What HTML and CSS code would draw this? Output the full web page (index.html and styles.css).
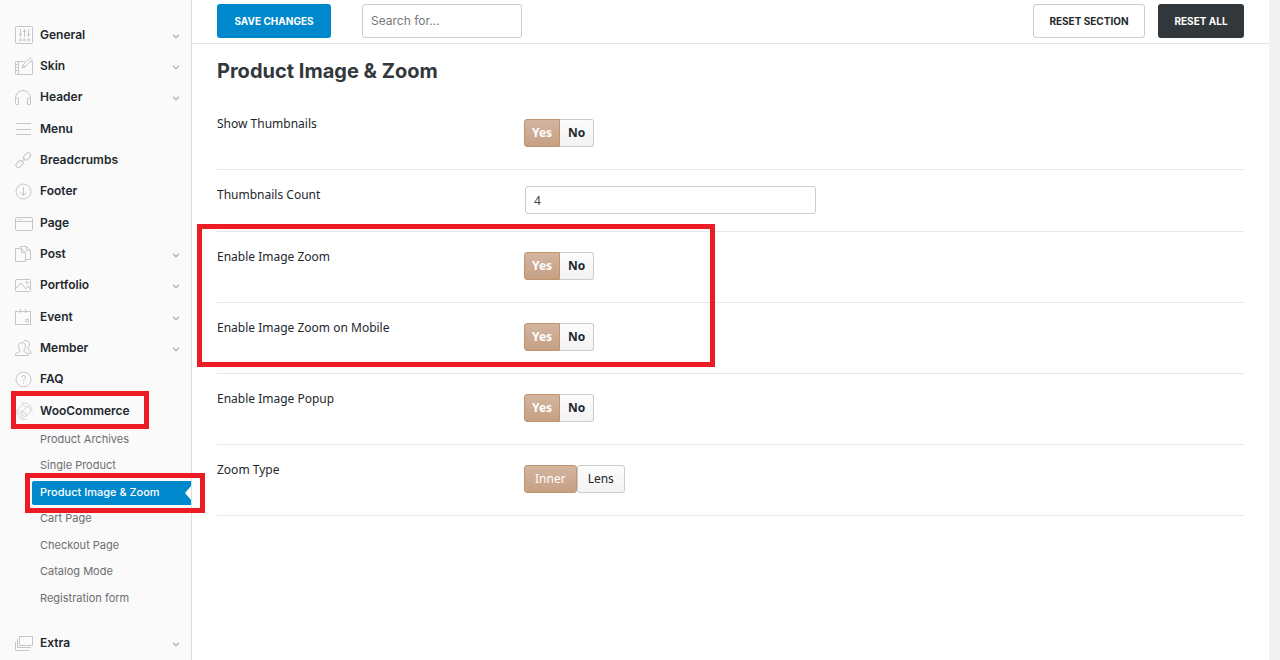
FILE: index.html
```html
<!DOCTYPE html>
<html lang="en">
<head>
    <meta charset="UTF-8">
    <meta name="viewport" content="width=device-width, initial-scale=1.0">
    <title>Product Image &amp; Zoom</title>
    <link rel="stylesheet" href="styles.css">
</head>
<body>
    <div class="page">
        <nav class="sidebar">
            <ul class="menu">
                <li><a href="#" class="menu-link">
                    <svg class="icon" viewBox="0 0 18 18"><rect x=".5" y=".5" width="17" height="17" rx="1"/><path d="M5.500 3v8M9.500 3v8M13.500 3v8M4 8.500h3M8 5.500h3M12 8.500h3"/><circle cx="5.500" cy="14" r="1"/><circle cx="9.500" cy="14" r="1"/><circle cx="13.500" cy="14" r="1"/></svg>
                    General<svg class="arrow" viewBox="0 0 8 5"><path d="M1 .8l3 3 3-3"/></svg></a></li>
                <li><a href="#" class="menu-link">
                    <svg class="icon" viewBox="0 0 18 18"><path d="M10 4.500H.5v13h17v-13h-2M3.500 4.500v13M.5 7.500h2M.5 10.500h2M.5 13.500h2M7 11l1-3 7-7.500 2 2-7 7.500zM8 8l2 2"/></svg>
                    Skin<svg class="arrow" viewBox="0 0 8 5"><path d="M1 .8l3 3 3-3"/></svg></a></li>
                <li><a href="#" class="menu-link">
                    <svg class="icon" viewBox="0 0 18 18"><path d="M.5 12v-2a7.500 7.500 0 0 1 15 0v2M1.500 10.500h2v6h-2q-1 0-1-1v-4q0-1 1-1zM14.500 10.500h-2v6h2q1 0 1-1v-4q0-1-1-1z"/></svg>
                    Header<svg class="arrow" viewBox="0 0 8 5"><path d="M1 .8l3 3 3-3"/></svg></a></li>
                <li><a href="#" class="menu-link">
                    <svg class="icon" viewBox="0 0 18 18"><path d="M1 3.500h15M1 9.500h15M1 14.500h15"/></svg>
                    Menu</a></li>
                <li><a href="#" class="menu-link">
                    <svg class="icon" viewBox="0 0 18 18"><rect x="-4" y="-2.500" width="8" height="5" rx="2.500" transform="translate(12 5.500) rotate(-45)"/><rect x="-4" y="-2.500" width="8" height="5" rx="2.500" transform="translate(4.500 13) rotate(-45)"/><path d="M6 11.500l4.500-4.500"/></svg>
                    Breadcrumbs</a></li>
                <li><a href="#" class="menu-link">
                    <svg class="icon" viewBox="0 0 18 18"><circle cx="8.500" cy="9.500" r="7.500"/><path d="M8.500 5v8M5.500 10.500l3 3 3-3"/></svg>
                    Footer</a></li>
                <li><a href="#" class="menu-link">
                    <svg class="icon" viewBox="0 0 18 18"><rect x=".5" y="3.500" width="17" height="13" rx="1"/><path d="M1 7.500h16M2.500 5.500h1M4.500 5.500h1M6.500 5.500h1"/></svg>
                    Page</a></li>
                <li><a href="#" class="menu-link">
                    <svg class="icon" viewBox="0 0 18 18"><path d="M.5 3.500h6l4 4v9H.5zM6.500 3.500v4h4M5.500 3.500v-2h6l4 4v9h-5M11.500 1.500v4h4"/></svg>
                    Post<svg class="arrow" viewBox="0 0 8 5"><path d="M1 .8l3 3 3-3"/></svg></a></li>
                <li><a href="#" class="menu-link">
                    <svg class="icon" viewBox="0 0 18 18"><rect x=".5" y="3.500" width="15" height="12" rx="1"/><path d="M1 12l5-5 5 6 2-3 2.500 3"/><circle cx="12" cy="6.500" r="1"/></svg>
                    Portfolio<svg class="arrow" viewBox="0 0 8 5"><path d="M1 .8l3 3 3-3"/></svg></a></li>
                <li><a href="#" class="menu-link">
                    <svg class="icon" viewBox="0 0 18 18"><rect x=".5" y="3.500" width="15" height="13"/><path d="M5.500 1v4M10.500 1v4M11 11.500h2.500V14H11z"/></svg>
                    Event<svg class="arrow" viewBox="0 0 8 5"><path d="M1 .8l3 3 3-3"/></svg></a></li>
                <li><a href="#" class="menu-link">
                    <svg class="icon" viewBox="0 0 18 18"><path d="M.5 16.500v-2l4.500-2v-1.500q-2-2-1.500-4.500.5-3 3.500-3t3.500 3q.5 2.500-1.500 4.500V12.500l4 2v2zM8.500 2.500q1-1 2.500-1 3 0 3.500 3 .4 2.500-1.500 4.500V10.500l2.500 1.500.5 2.500h-2.500"/></svg>
                    Member<svg class="arrow" viewBox="0 0 8 5"><path d="M1 .8l3 3 3-3"/></svg></a></li>
                <li><a href="#" class="menu-link">
                    <svg class="icon" viewBox="0 0 18 18"><circle cx="8.500" cy="9.500" r="7.500"/><path d="M6.500 7.500q0-2 2-2t2 2q0 1-1 1.800-1 .8-1 2M8.500 12.800v1.200"/></svg>
                    FAQ</a></li>
                <li class="marked"><a href="#" class="menu-link">
                    <svg class="icon icon-light" viewBox="0 0 18 18"><path d="M6 1.500A8 8 0 0 1 17 9M12 17A8 8 0 0 1 1.500 10M3 7.500l5-5 3 3-5 5zM11 5.500l2-1.500 3 5-4 4.500-3-4M6 10.500l3 4 3-1M3 7.500l-1.500 1 7 8M6 10.500l3-1"/></svg>
                    WooCommerce</a><span class="mark mark-item"></span></li>
            </ul>
            <ul class="submenu">
                <li><a href="#">Product Archives</a></li>
                <li><a href="#">Single Product</a></li>
                <li class="marked"><a href="#" class="active">Product Image &amp; Zoom</a><span class="mark mark-sub"></span></li>
                <li><a href="#">Cart Page</a></li>
                <li><a href="#">Checkout Page</a></li>
                <li><a href="#">Catalog Mode</a></li>
                <li><a href="#">Registration form</a></li>
            </ul>
            <ul class="menu-more">
                <li><a href="#" class="menu-link">
                    <svg class="icon" viewBox="0 0 18 18"><path d="M4.500 2.500h13v9h-13zM2.500 5v8.500H16M.5 8v8.500H14"/></svg>
                    Extra<svg class="arrow" viewBox="0 0 8 5"><path d="M1 .8l3 3 3-3"/></svg></a></li>
            </ul>
        </nav>

        <main class="main">
            <div class="topbar">
                <button type="button" class="btn btn-save">SAVE CHANGES</button>
                <input type="search" class="search" placeholder="Search for..." aria-label="Search for">
                <button type="button" class="btn btn-section">RESET SECTION</button>
                <button type="button" class="btn btn-all">RESET ALL</button>
            </div>

            <form class="options">
                <h1>Product Image &amp; Zoom</h1>
                <div class="row" role="group" aria-labelledby="thumbs">
                    <span class="label" id="thumbs">Show Thumbnails</span>
                    <div class="switch">
                        <input type="radio" name="thumbs" id="thumbs-yes" checked><label for="thumbs-yes">Yes</label>
                        <input type="radio" name="thumbs" id="thumbs-no"><label for="thumbs-no">No</label>
                    </div>
                </div>
                <div class="row row-text">
                    <label class="label" for="count">Thumbnails Count</label>
                    <input type="text" class="text-input" id="count" value="4">
                </div>
                <div class="marked">
                    <div class="row" role="group" aria-labelledby="zoom">
                        <span class="label" id="zoom">Enable Image Zoom</span>
                        <div class="switch">
                            <input type="radio" name="zoom" id="zoom-yes" checked><label for="zoom-yes">Yes</label>
                            <input type="radio" name="zoom" id="zoom-no"><label for="zoom-no">No</label>
                        </div>
                    </div>
                    <div class="row" role="group" aria-labelledby="mobile">
                        <span class="label" id="mobile">Enable Image Zoom on Mobile</span>
                        <div class="switch">
                            <input type="radio" name="mobile" id="mobile-yes" checked><label for="mobile-yes">Yes</label>
                            <input type="radio" name="mobile" id="mobile-no"><label for="mobile-no">No</label>
                        </div>
                    </div>
                    <span class="mark mark-rows"></span>
                </div>
                <div class="row" role="group" aria-labelledby="popup">
                    <span class="label" id="popup">Enable Image Popup</span>
                    <div class="switch">
                        <input type="radio" name="popup" id="popup-yes" checked><label for="popup-yes">Yes</label>
                        <input type="radio" name="popup" id="popup-no"><label for="popup-no">No</label>
                    </div>
                </div>
                <div class="row" role="group" aria-labelledby="type">
                    <span class="label" id="type">Zoom Type</span>
                    <div class="switch button-set">
                        <input type="radio" name="type" id="type-inner" checked><label for="type-inner">Inner</label>
                        <input type="radio" name="type" id="type-lens"><label for="type-lens">Lens</label>
                    </div>
                </div>
            </form>
        </main>
        <div class="gutter"></div>
    </div>
</body>
</html>
```

FILE: styles.css
```css
* {
    margin: 0;
    padding: 0;
    box-sizing: border-box;
}

body {
    font-family: 'Noto Sans', sans-serif;
    font-size: 12px;
    color: #23282d;
    background: #fff;
}

ul {
    list-style: none;
}

a {
    color: inherit;
    text-decoration: none;
}

.page {
    display: grid;
    grid-template-columns: 192px 1fr 11px;
    min-height: 100vh;
}

.gutter {
    background: #f1f1f1;
}

/* Sidebar */
.sidebar {
    padding-top: 19px;
    background: #fafafa;
    border-right: 1px solid #dedede;
    font-family: Inter, sans-serif;
}

.menu li:nth-child(3n) {
    margin-bottom: 1px;
}

.menu-link {
    display: flex;
    align-items: center;
    gap: 7px;
    height: 31px;
    padding: 0 11px 0 15px;
    font-size: 12px;
    font-weight: 600;
}

.icon {
    width: 18px;
    height: 18px;
    fill: none;
    stroke: #c6c6ca;
    stroke-width: 1;
}

.icon-light {
    stroke: #d4d4d6;
}

.arrow {
    width: 8px;
    height: 5px;
    margin: 3px 0 0 auto;
    fill: none;
    stroke: #b4b6b8;
    stroke-width: 1.5;
}

.submenu {
    padding: 1px 0 15px;
}

.submenu li {
    padding: 1px 0 1px 32px;
}

.submenu li:nth-child(2n) {
    margin-bottom: 1px;
}

.submenu a {
    display: block;
    height: 24px;
    padding-left: 8px;
    line-height: 23px;
    font-size: 11px;
    color: #6b6e71;
}

.submenu .active {
    position: relative;
    border-radius: 2px 0 0 2px;
    background: #0088cc;
    color: #fff;
    font-weight: 500;
}

.submenu .active::after {
    content: "";
    position: absolute;
    right: 0;
    top: 5px;
    border: 7px solid transparent;
    border-left-width: 0;
    border-right: 6px solid #fff;
}

/* Red callout frames */
.marked {
    position: relative;
}

.mark {
    position: absolute;
    z-index: 1;
    border: 5px solid #ed1c24;
    pointer-events: none;
}

.mark-item {
    top: -4px;
    bottom: -3px;
    left: 11px;
    right: 42px;
}

.mark-sub {
    top: -7px;
    bottom: -7px;
    left: 25px;
    right: -14px;
}

.mark-rows {
    top: -8px;
    bottom: 7px;
    left: -20px;
    width: 518px;
}

/* Top bar */
.topbar {
    display: flex;
    padding: 4px 25px 5px;
    border-bottom: 1px solid #e5e5e5;
}

.btn {
    height: 34px;
    padding-bottom: 1px;
    border: 1px solid transparent;
    border-radius: 3px;
    font-family: Inter, sans-serif;
    font-size: 10px;
    font-weight: 700;
    cursor: pointer;
}

.btn-save {
    width: 114px;
    background: #0088cc;
    color: #fff;
}

.search {
    width: 160px;
    height: 34px;
    margin-left: 31px;
    padding: 0 8px 1px;
    border: 1px solid #ccc;
    border-radius: 3px;
    font-family: Inter, sans-serif;
    font-size: 12px;
}

.search::placeholder {
    color: #777;
}

.btn-section {
    width: 112px;
    margin-left: auto;
    border-color: #ccc;
    background: #fff;
    color: #23282d;
}

.btn-all {
    width: 86px;
    margin-left: 13px;
    background: #32373c;
    color: #fff;
}

/* Options */
.options {
    padding: 0 25px;
}

h1 {
    padding: 13px 0 14px;
    font-family: Inter, sans-serif;
    font-size: 20px;
    line-height: 28px;
    font-weight: 700;
    color: #32373c;
}

.row {
    display: grid;
    grid-template-columns: 307px 1fr;
    align-items: start;
    padding: 14px 0 22px;
    border-bottom: 1px solid #e7e7e7;
}

.row-text {
    padding-bottom: 17px;
}

.label {
    line-height: 22px;
}

.switch {
    display: flex;
    margin-top: 6px;
}

.text-input {
    width: 291px;
    height: 28px;
    margin: 2px 0 0 1px;
    padding: 0 8px;
    border: 1px solid #ccc;
    border-radius: 3px;
    font: inherit;
    color: #444;
}

.switch input {
    position: absolute;
    opacity: 0;
}

.switch label {
    height: 28px;
    padding: 0 8px;
    border: 1px solid #ccc;
    border-left: 0;
    border-radius: 0 3px 3px 0;
    background: linear-gradient(#fcfcfc, #f3f3f3);
    line-height: 26px;
    font-weight: 700;
    cursor: pointer;
}

.switch input:checked + label {
    padding: 0 7px;
    border: 1px solid #bf946f;
    border-radius: 3px 0 0 3px;
    background: linear-gradient(#d3b5a0, #c5a083);
    color: #fff;
}

.switch.button-set label {
    padding: 0 10px;
    border-left: 1px solid #ccc;
    border-radius: 3px;
    font-weight: 400;
}

.switch.button-set input:checked + label {
    padding: 0 10px;
    border-color: #bf946f;
    border-radius: 3px;
}
```
